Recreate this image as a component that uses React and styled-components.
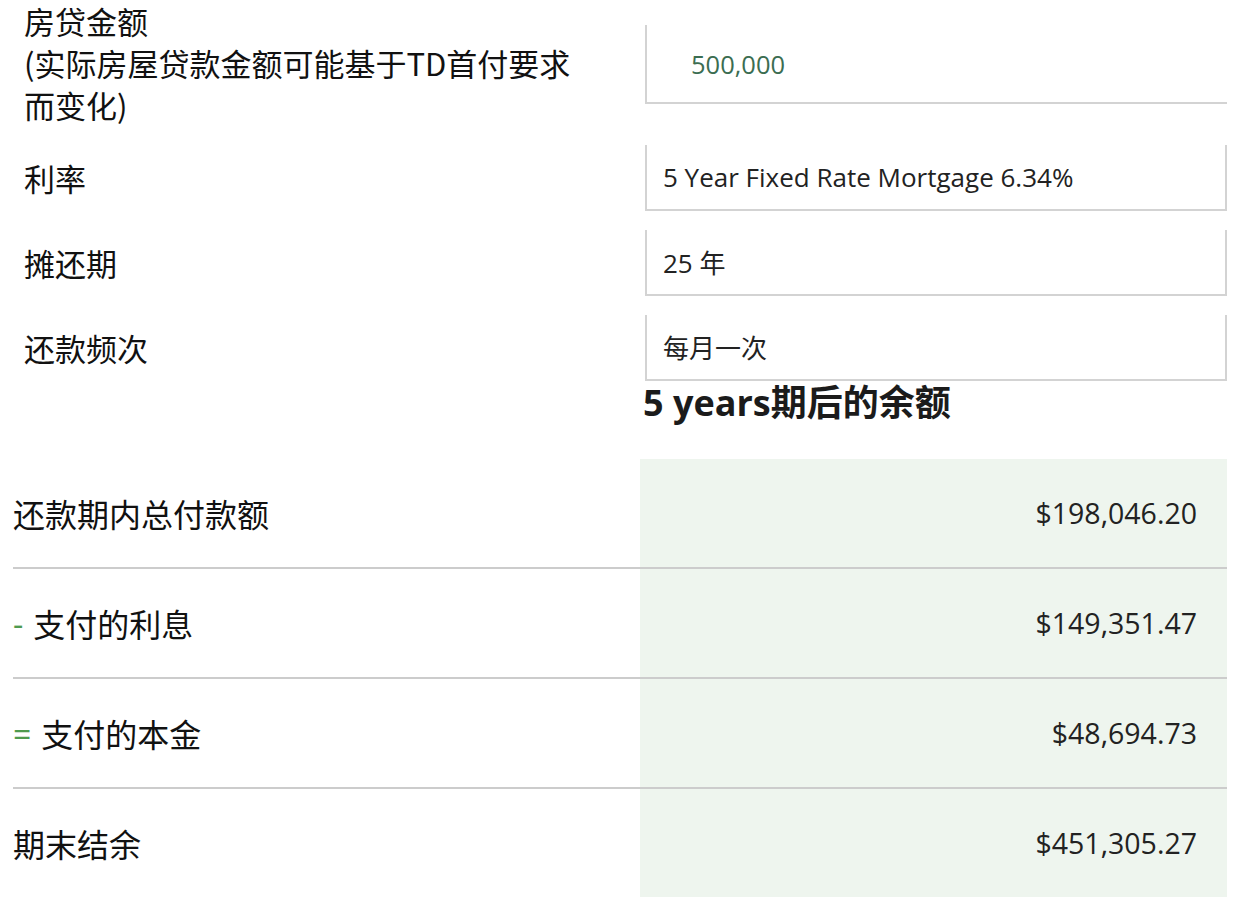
import React from "react";
import styled, { createGlobalStyle } from "styled-components";

const Global = createGlobalStyle`
  html, body { margin: 0; padding: 0; background: #ffffff; }
  body { font-family: "Open Sans", "Noto Sans CJK SC", sans-serif; color: #1e1e1e; }
`;

const Page = styled.div`
  width: 1250px;
  box-sizing: border-box;
  padding: 0 23px 0 13px;
`;

const Form = styled.div`
  display: grid;
  grid-template-columns: 621px 582px;
  row-gap: 19px;
  padding-left: 11px;
  align-items: center;
`;

const Label = styled.div`
  font-family: "Noto Sans CJK SC", "Open Sans", sans-serif;
  font-size: 31px;
  font-weight: 400;
  line-height: ${(p) => (p.$multi ? "42px" : "46px")};
  color: #111111;
  align-self: ${(p) => (p.$multi ? "start" : "center")};
`;

const Field = styled.div`
  box-sizing: border-box;
  height: ${(p) => p.$h}px;
  margin-top: ${(p) => p.$mt || 0}px;
  align-self: ${(p) => (p.$mt ? "start" : "center")};
  border: 2px solid #d3d3d3;
  border-top: none;
  ${(p) => (p.$open ? "border-right: none;" : "")}
  display: flex;
  align-items: center;
  padding-left: ${(p) => p.$pad}px;
  font-family: "Open Sans", "Noto Sans CJK SC", sans-serif;
  font-size: ${(p) => (p.$green ? "25.5px" : "26px")};
  color: ${(p) => (p.$green ? "#3b6d51" : "#222222")};
`;

const Heading = styled.h2`
  margin: 0;
  padding-left: 630px;
  font-family: "Open Sans", "Noto Sans CJK SC", sans-serif;
  font-size: 36px;
  line-height: 44px;
  font-weight: 700;
  color: #1b1b1b;
`;

const Table = styled.div`
  margin-top: 34px;
  display: grid;
  grid-template-columns: 627px 587px;
`;

const Cell = styled.div`
  box-sizing: border-box;
  height: ${(p) => (p.$last ? 108 : 110)}px;
  display: flex;
  align-items: center;
  border-bottom: ${(p) => (p.$last ? "none" : "2px solid #cccccc")};
`;

const LabelCell = styled(Cell)`
  font-family: "Noto Sans CJK SC", "Open Sans", sans-serif;
  font-size: 32px;
  font-weight: 400;
  color: #111111;
`;

const ValueCell = styled(Cell)`
  background: #eef5ee;
  justify-content: flex-end;
  padding-right: 30px;
  font-family: "Open Sans", sans-serif;
  font-size: 28.5px;
  color: #222222;
`;

const Sign = styled.span`
  color: #4f9a4f;
  font-family: "Open Sans", sans-serif;
  margin: 0 10px 0 0;
`;

const rows = [
  { sign: null, label: "还款期内总付款额", value: "$198,046.20" },
  { sign: "-", label: "支付的利息", value: "$149,351.47" },
  { sign: "=", label: "支付的本金", value: "$48,694.73" },
  { sign: null, label: "期末结余", value: "$451,305.27" },
];

export default function App() {
  return (
    <Page>
      <Global />
      <Form>
        <Label $multi>
          房贷金额
          <br />
          (实际房屋贷款金额可能基于TD首付要求
          <br />
          而变化)
        </Label>
        <Field $h={79} $mt={25} $pad={44} $open $green>
          500,000
        </Field>
        <Label>利率</Label>
        <Field $h={66} $pad={16}>
          5 Year Fixed Rate Mortgage 6.34%
        </Field>
        <Label>摊还期</Label>
        <Field $h={66} $pad={16}>
          25 年
        </Field>
        <Label>还款频次</Label>
        <Field $h={66} $pad={16}>
          每月一次
        </Field>
      </Form>
      <Heading>5 years期后的余额</Heading>
      <Table>
        {rows.map((r, i) => {
          const last = i === rows.length - 1;
          return (
            <React.Fragment key={r.label}>
              <LabelCell $last={last}>
                {r.sign && <Sign>{r.sign}</Sign>}
                {r.label}
              </LabelCell>
              <ValueCell $last={last}>{r.value}</ValueCell>
            </React.Fragment>
          );
        })}
      </Table>
    </Page>
  );
}
